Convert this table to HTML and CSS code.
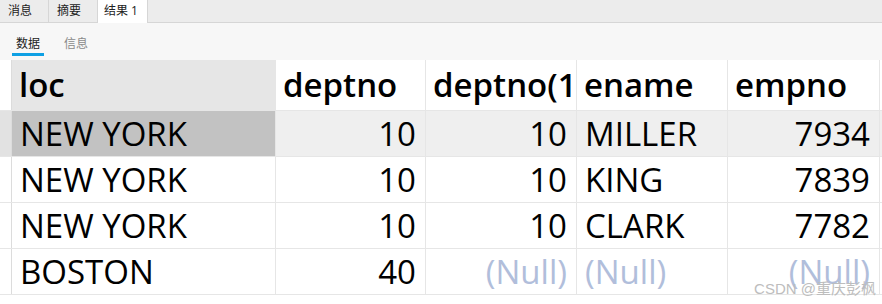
FILE: index.html
```html
<!DOCTYPE html>
<html lang="zh">
<head>
  <meta charset="UTF-8" />
  <title>结果 1</title>
  <link rel="stylesheet" href="styles.css">
</head>
<body>

  <div class="tabs">
    <div class="tab">消息</div>
    <div class="tab">摘要</div>
    <div class="tab active">结果 1</div>
  </div>

  <div class="subtabs">
    <span class="subtab current">数据</span>
    <span class="subtab">信息</span>
  </div>

  <div class="grid">
    <div class="row head">
      <div class="gutter"></div>
      <div class="cell sel-col">loc</div>
      <div class="cell">deptno</div>
      <div class="cell clip">deptno(1)</div>
      <div class="cell">ename</div>
      <div class="cell">empno</div>
    </div>
    <div class="row picked">
      <div class="gutter"></div>
      <div class="cell sel-cell">NEW YORK</div>
      <div class="cell num">10</div>
      <div class="cell num">10</div>
      <div class="cell">MILLER</div>
      <div class="cell num">7934</div>
    </div>
    <div class="row">
      <div class="gutter"></div>
      <div class="cell">NEW YORK</div>
      <div class="cell num">10</div>
      <div class="cell num">10</div>
      <div class="cell">KING</div>
      <div class="cell num">7839</div>
    </div>
    <div class="row">
      <div class="gutter"></div>
      <div class="cell">NEW YORK</div>
      <div class="cell num">10</div>
      <div class="cell num">10</div>
      <div class="cell">CLARK</div>
      <div class="cell num">7782</div>
    </div>
    <div class="row">
      <div class="gutter"></div>
      <div class="cell">BOSTON</div>
      <div class="cell num">40</div>
      <div class="cell num null">(Null)</div>
      <div class="cell null">(Null)</div>
      <div class="cell num null">(Null)</div>
    </div>
  </div>

  <div class="mark">CSDN @重庆彭枫</div>

</body>
</html>
```

FILE: styles.css
```css
body {
  font-family: 'Open Sans', 'Noto Sans CJK SC', sans-serif;
  margin: 0;
  padding: 0;
  background: #fff;
  color: #000;
  position: relative;
  height: 304px;
  overflow: hidden;
}
.tabs {
  display: flex;
  height: 22px;
  background: #ececec;
  border-bottom: 1px solid #d6d6d6;
}
.tab {
  box-sizing: border-box;
  width: 49px;
  padding-left: 8px;
  font-size: 12px;
  line-height: 22px;
  color: #222;
  border-right: 1px solid #d6d6d6;
}
.tab.active {
  width: 50px;
  height: 23px;
  margin-bottom: -1px;
  background: #fff;
  padding-left: 6px;
}
.subtabs {
  display: flex;
  gap: 16px;
  height: 37px;
  padding-left: 12px;
  background: #f7f7f7;
}
.subtab {
  font-size: 12px;
  color: #8a8a8a;
  padding: 11px 4px 0;
  height: 19px;
}
.subtab.current {
  color: #222;
  border-bottom: 3px solid #0ea0e4;
}
.grid {
  width: 882px;
  background: #f3f3f3;
}
.row {
  display: grid;
  grid-template-columns: 12px 264px 150px 151px 151px 152px 2px;
  height: 45px;
  border-bottom: 1px solid #e6e6e6;
  background: #fff;
  font-size: 33px;
}
.row.head {
  height: 50px;
  font-weight: 600;
}
.gutter {
  border-right: 1px solid #dcdcdc;
}
.cell {
  box-sizing: border-box;
  padding: 0 9px 0 8px;
  line-height: 46px;
  white-space: nowrap;
  overflow: hidden;
  border-right: 1px solid #e6e6e6;
}
.head .cell {
  line-height: 49px;
  padding-left: 7px;
}
.clip {
  text-overflow: clip;
  padding-right: 0;
}
.num {
  text-align: right;
}
.sel-col {
  background: #e6e6e6;
}
.row.picked {
  background: #efefef;
}
.picked .gutter {
  background: #e2e2e2;
}
.sel-cell {
  background: #c2c2c2;
}
.null {
  color: #b1bedb;
}
.mark {
  position: absolute;
  right: 6px;
  bottom: 6px;
  font-size: 15px;
  color: #bdbdbd;
  font-family: 'Liberation Sans', 'Noto Sans CJK SC', sans-serif;
}
```
